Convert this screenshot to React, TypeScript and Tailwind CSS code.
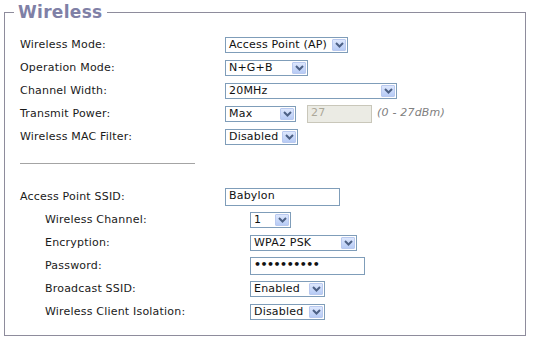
import React from 'react';

// XP-style dropdown arrow
const Chevron = () => (
  <svg width="9" height="6" viewBox="0 0 9 6">
    <path d="M1 1 L4.5 4.5 L8 1" fill="none" stroke="#4d6185" strokeWidth="2" />
  </svg>
);

const Select: React.FC<{ value: string; className: string }> = ({ value, className }) => (
  <div className={`flex h-[16px] items-stretch border border-[#7f9db9] bg-white ${className}`}>
    <span className="flex-1 pl-[3px] leading-[14px] text-[#111]">{value}</span>
    <span className="m-px flex w-[14px] items-center justify-center rounded-[1px] border border-[#b9c9ef] bg-gradient-to-b from-[#dde7fd] to-[#b7cbf5]">
      <Chevron />
    </span>
  </div>
);

const TextBox: React.FC<{ value: string; className: string }> = ({ value, className }) => (
  <div className={`flex h-[18px] items-center border border-[#7f9db9] bg-white pl-[3px] text-[#111] ${className}`}>
    {value}
  </div>
);

const Row: React.FC<{ label: string; indent?: boolean; children: React.ReactNode }> = ({ label, indent, children }) => (
  <div className="grid h-[23px] grid-cols-[205px_1fr] items-center">
    <span className={`pt-px ${indent ? 'pl-[25px]' : ''}`}>{label}</span>
    <div className={`flex items-center ${indent ? 'pl-[25px]' : ''}`}>{children}</div>
  </div>
);

export default function App() {
  return (
    <div className="h-[341px] w-[535px] bg-white pl-[4px] pt-px font-['DejaVu_Sans',Verdana,sans-serif] text-[11px] tracking-[0.2px] text-[#1a1a1a]">
      <fieldset className="h-[335px] w-[522px] border border-[#8e8c9c] px-0 pb-0">
        <legend className="ml-[9px] px-[4px] text-[17px] leading-[22px] font-bold tracking-[0.3px] text-[#7f80a6]">
          Wireless
        </legend>
        <div className="pl-[15px] pt-[10px]">
          <Row label="Wireless Mode:">
            <Select value="Access Point (AP)" className="w-[123px]" />
          </Row>
          <Row label="Operation Mode:">
            <Select value="N+G+B" className="w-[83px]" />
          </Row>
          <Row label="Channel Width:">
            <Select value="20MHz" className="w-[172px]" />
          </Row>
          <Row label="Transmit Power:">
            <Select value="Max" className="w-[71px]" />
            <div className="ml-[11px] flex h-[18px] w-[65px] items-center border border-[#c9c7ba] bg-[#ebebe4] pl-[3px] text-[#aca899]">
              27
            </div>
            <span className="ml-[5px] italic text-[#808080]">(0 - 27dBm)</span>
          </Row>
          <Row label="Wireless MAC Filter:">
            <Select value="Disabled" className="w-[73px]" />
          </Row>

          <div className="mt-[15px] mb-[21px] h-px w-[175px] bg-[#a4a4a4]" />

          <Row label="Access Point SSID:">
            <TextBox value="Babylon" className="w-[115px]" />
          </Row>
          <Row label="Wireless Channel:" indent>
            <Select value="1" className="w-[41px]" />
          </Row>
          <Row label="Encryption:" indent>
            <Select value="WPA2 PSK" className="w-[107px]" />
          </Row>
          <Row label="Password:" indent>
            <TextBox value="••••••••••" className="w-[115px] font-bold tracking-[-0.5px]" />
          </Row>
          <Row label="Broadcast SSID:" indent>
            <Select value="Enabled" className="w-[75px]" />
          </Row>
          <Row label="Wireless Client Isolation:" indent>
            <Select value="Disabled" className="w-[75px]" />
          </Row>
        </div>
      </fieldset>
    </div>
  );
}
